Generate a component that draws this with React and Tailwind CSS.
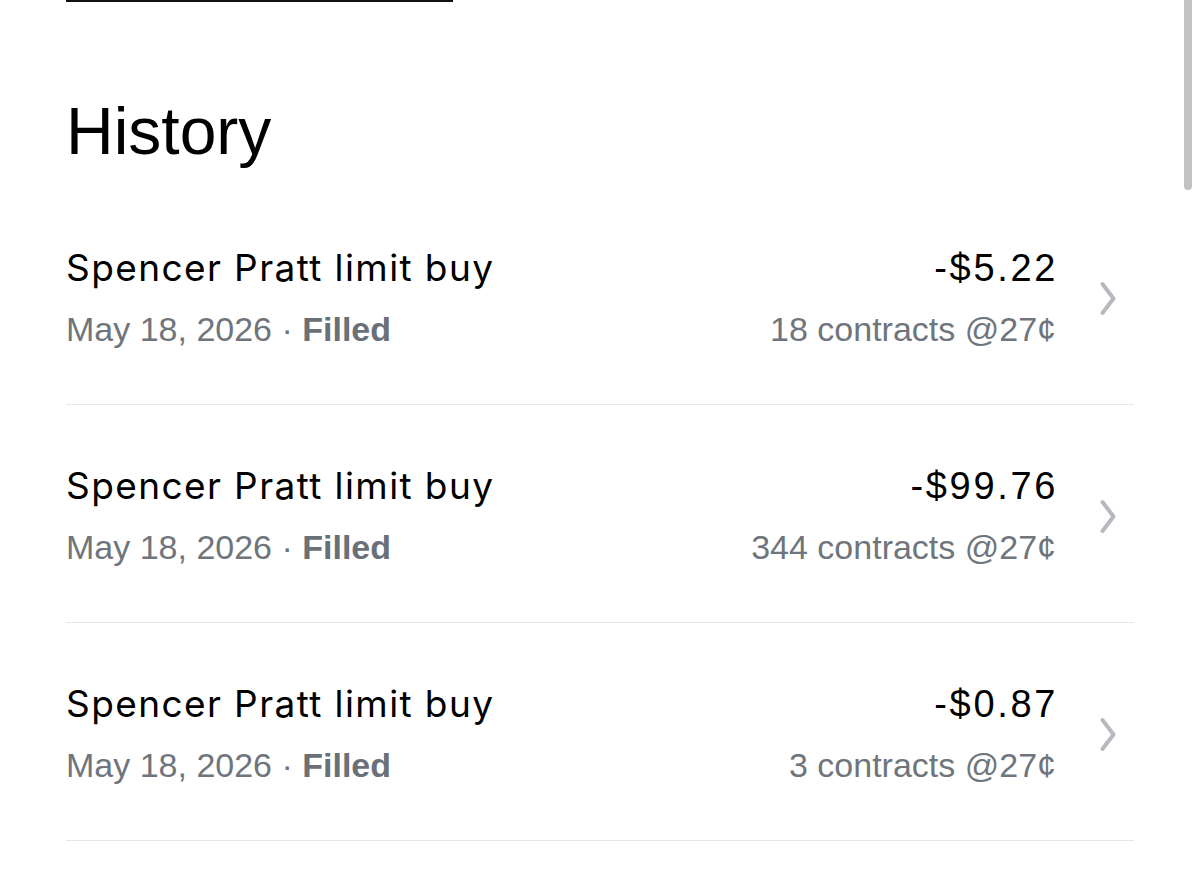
import React from "react";

const rows = [
  { amount: "-$5.22", detail: "18 contracts @27¢" },
  { amount: "-$99.76", detail: "344 contracts @27¢" },
  { amount: "-$0.87", detail: "3 contracts @27¢" },
];

function Chevron() {
  return (
    <svg width="20" height="36" viewBox="0 0 20 36" fill="none" className="shrink-0">
      <path d="M4.5 3 L15.5 17.5 L4.5 32" stroke="#b6babe" strokeWidth="4" strokeLinecap="round" strokeLinejoin="round" />
    </svg>
  );
}

export default function App() {
  return (
    <div className="relative w-[1200px] h-[895px] overflow-hidden bg-white font-['Liberation_Sans',Arial,sans-serif]">
      <div className="px-[66px]">
        <div className="h-[2px] w-[387px] bg-[#111]" />
        <h1 className="mt-[97px] text-[66px] leading-[65px] text-black font-normal">History</h1>
        <div className="mt-[23px]">
          {rows.map((r, i) => (
            <div key={i} className="flex items-start pt-[59px] pb-[53px] border-b border-[#e6e6e6]">
              <div className="flex-1">
                <div className="font-['Inter',sans-serif] text-[37px] leading-[44px] text-black tracking-[0.038em]">
                  Spencer Pratt limit buy
                </div>
                <div className="mt-[17px] text-[34px] leading-[44px] text-[#6f757c]">
                  May 18, 2026 · <span className="font-bold text-[#6a7077]">Filled</span>
                </div>
              </div>
              <div className="flex flex-col items-end">
                <div className="text-[38px] leading-[44px] text-black tracking-[0.07em] mr-[-2px]">{r.amount}</div>
                <div className="mt-[17px] text-[34px] leading-[44px] text-[#6f757c]">{r.detail}</div>
              </div>
              <div className="w-[78px] flex justify-end pr-[16px] self-center">
                <Chevron />
              </div>
            </div>
          ))}
        </div>
      </div>
      <div className="absolute right-[8px] top-0 w-[8px] h-[190px] rounded-b-full bg-[#c2c2c2]" />
    </div>
  );
}
